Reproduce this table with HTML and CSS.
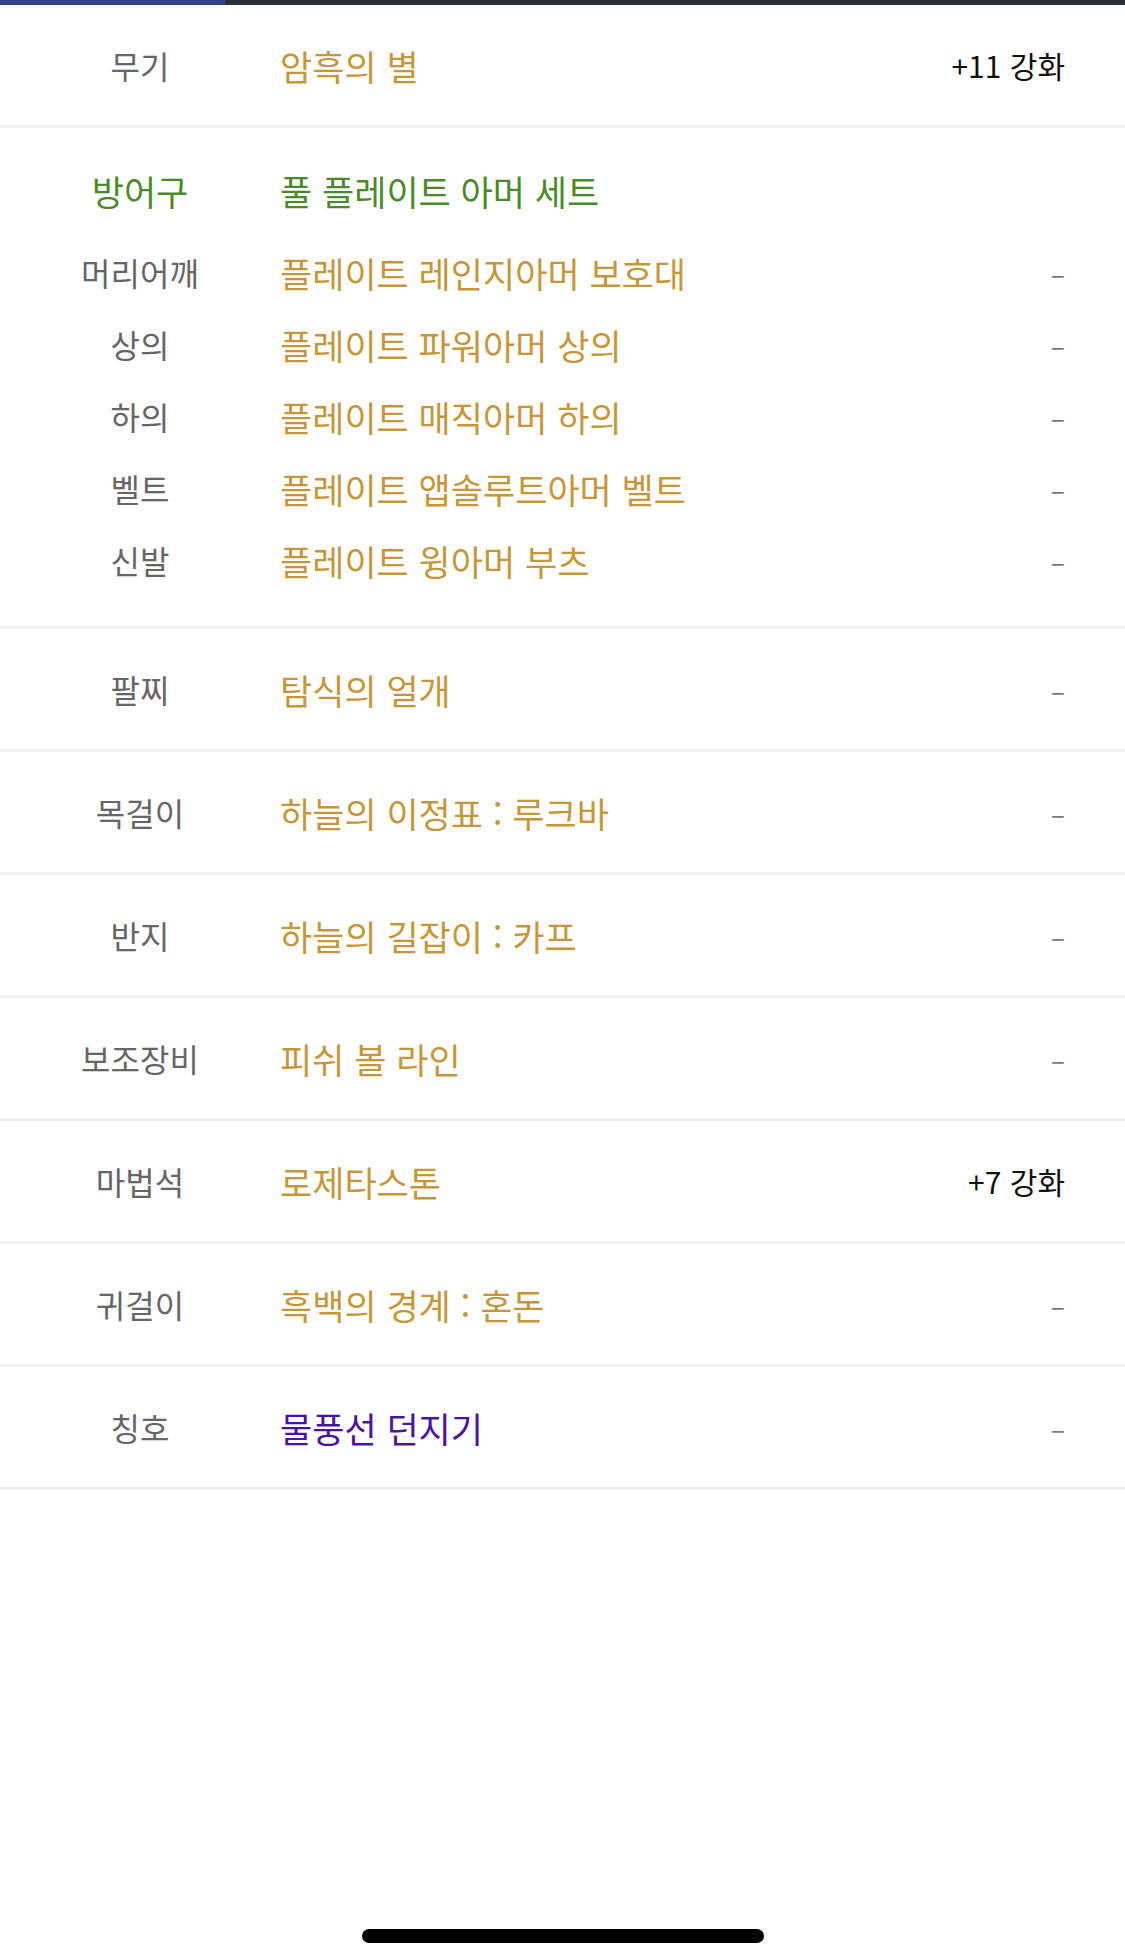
FILE: index.html
```html
<!DOCTYPE html>
<html lang="ko">
<head>
    <meta charset="UTF-8">
    <meta name="viewport" content="width=device-width, initial-scale=1.0">
    <title>장비</title>
    <link rel="stylesheet" href="styles.css">
</head>
<body>
    <div class="tabbar">
        <div class="tab-on"></div>
    </div>

    <div class="list">
        <div class="row">
            <div class="label">무기</div>
            <div class="name">암흑의 별</div>
            <div class="value">+11 강화</div>
        </div>

        <div class="armor">
            <div class="row head">
                <div class="label set">방어구</div>
                <div class="name set">풀 플레이트 아머 세트</div>
            </div>
            <div class="row sub">
                <div class="label">머리어깨</div>
                <div class="name">플레이트 레인지아머 보호대</div>
                <div class="value dash">–</div>
            </div>
            <div class="row sub">
                <div class="label">상의</div>
                <div class="name">플레이트 파워아머 상의</div>
                <div class="value dash">–</div>
            </div>
            <div class="row sub">
                <div class="label">하의</div>
                <div class="name">플레이트 매직아머 하의</div>
                <div class="value dash">–</div>
            </div>
            <div class="row sub">
                <div class="label">벨트</div>
                <div class="name">플레이트 앱솔루트아머 벨트</div>
                <div class="value dash">–</div>
            </div>
            <div class="row sub">
                <div class="label">신발</div>
                <div class="name">플레이트 윙아머 부츠</div>
                <div class="value dash">–</div>
            </div>
        </div>

        <div class="row">
            <div class="label">팔찌</div>
            <div class="name">탐식의 얼개</div>
            <div class="value dash">–</div>
        </div>
        <div class="row">
            <div class="label">목걸이</div>
            <div class="name">하늘의 이정표 : 루크바</div>
            <div class="value dash">–</div>
        </div>
        <div class="row">
            <div class="label">반지</div>
            <div class="name">하늘의 길잡이 : 카프</div>
            <div class="value dash">–</div>
        </div>
        <div class="row">
            <div class="label">보조장비</div>
            <div class="name">피쉬 볼 라인</div>
            <div class="value dash">–</div>
        </div>
        <div class="row">
            <div class="label">마법석</div>
            <div class="name">로제타스톤</div>
            <div class="value">+7 강화</div>
        </div>
        <div class="row">
            <div class="label">귀걸이</div>
            <div class="name">흑백의 경계 : 혼돈</div>
            <div class="value dash">–</div>
        </div>
        <div class="row">
            <div class="label">칭호</div>
            <div class="name title">물풍선 던지기</div>
            <div class="value dash">–</div>
        </div>
    </div>

    <div class="home-bar"></div>
</body>
</html>
```

FILE: styles.css
```css
body {
    margin: 0;
    width: 1125px;
    height: 1954px;
    background-color: #fff;
    position: relative;
    overflow: hidden;
}
body * {
    font-family: "Noto Sans CJK KR", "Noto Sans", sans-serif;
}

/* 상단 탭 진행바 */
div.tabbar {
    height: 5px;
    background-color: #2c2f39;
}
div.tabbar div.tab-on {
    width: 225px;
    height: 5px;
    background-color: #2f4287;
}

div.list > div.row,
div.list > div.armor {
    border-bottom: 3px solid #f1f1f1;
}

div.row {
    display: flex;
    align-items: center;
    height: 120px;
    padding-right: 60px;
    font-size: 30px;
}
div.row div.label {
    width: 280px;
    text-align: center;
    color: #666;
    font-size: 32px;
}
div.row div.name {
    flex: 1;
    color: #c6973a;
    font-size: 35px;
}
div.row div.value {
    color: #111;
}
div.row div.dash {
    color: #7a7a7a;
    font-size: 26px;
}

/* 방어구 세트 */
div.armor {
    padding-top: 26px;
    padding-bottom: 30px;
}
div.armor div.row.head {
    height: 72px;
    margin-bottom: 10px;
}
div.armor div.row.sub {
    height: 72px;
}
div.row div.set {
    color: #4b8a28;
    font-size: 35px;
}
div.row div.title {
    color: #4a14a0;
}

/* 홈 인디케이터 */
div.home-bar {
    position: absolute;
    left: 362px;
    top: 1929px;
    width: 402px;
    height: 14px;
    border-radius: 7px;
    background-color: #000;
}
```
